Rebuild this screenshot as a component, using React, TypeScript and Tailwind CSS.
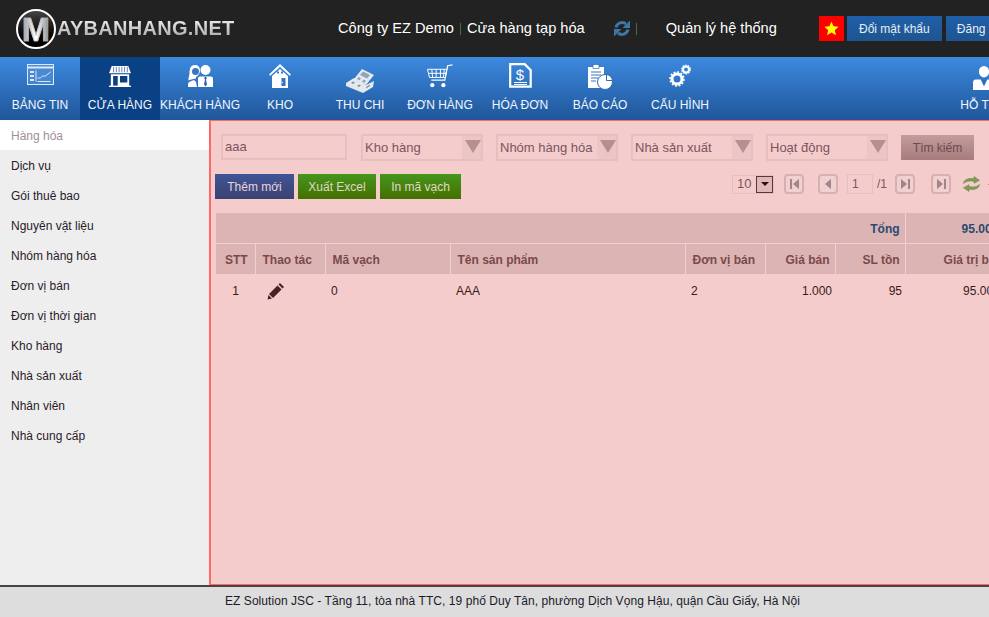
import React from 'react';

const font = { fontFamily: '"Liberation Sans", Arial, sans-serif' };

const IconDashboard = () => (
  <svg className="mb-[3px]" width="27" height="21" viewBox="0 0 27 21" fill="none" stroke="#dbe8f8" strokeWidth="1">
    <rect x="0.500" y="0.500" width="26" height="20" fill="#6fa3e2" fillOpacity="0.35" />
    <path d="M.5 3.500h26" strokeWidth="2" />
    <path d="M3 7h4v2H3zM3 11h4v2H3zM3 15h4v2H3z" fill="#dbe8f8" stroke="none" />
    <path d="M9 6.500v11M10.500 14h3l2-2h3l5-4M10.500 17.500h13" />
  </svg>
);

const IconStore = () => (
  <svg className="mb-px" width="22" height="22" viewBox="0 0 24 24" fill="#fff">
    <path d="M3 1h18l3 8H0z" />
    <path d="M5 2v6M8 2v6M11 2v6M14 2v6M17 2v6M20 2v6" stroke="#2a5a98" strokeWidth="0.800" />
    <path d="M2 10h20v13H2zM4.500 12v11h5V12zM12 12v7h8v-7z" fillRule="evenodd" />
    <path d="M0 22.500h24V24H0z" />
  </svg>
);

const IconCustomers = () => (
  <svg width="26" height="24" viewBox="0 0 26 24" fill="#fff">
    <path d="M8 1c3.600 0 5 2.600 5 5.500 0 3-2 5.500-4 6.500v1.500c-3.500 1-6.500 1-7.500 2C1 14 2.500 12 2.500 9 2.500 4 4 1 8 1z" />
    <circle cx="8.500" cy="7.500" r="3.500" fill="#3b75bd" />
    <circle cx="18.500" cy="6" r="5" />
    <path d="M13 12.500h11c1.200 0 2 .8 2 2V23H11v-8.500c0-1.200.8-2 2-2z" />
    <path d="M18.500 12.500L17 14l1 1.500-1 5 1.500 2 1.500-2-1-5 1-1.500z" fill="#2d65aa" />
    <path d="M1 23v-3c0-2 3-3 6-4l2 2 1 5z" />
  </svg>
);

const IconHouse = () => (
  <svg width="22" height="24" viewBox="0 0 22 24" fill="#fff">
    <path d="M11 0L0 10.500l1.200 1.300L11 3l9.800 8.800 1.200-1.300z" />
    <path d="M3 12l8-7 8 7v12H3zM8 7.500h2v2H8zM12 7.500h2v2h-2zM12.500 14v8h4v-8z" fillRule="evenodd" />
    <circle cx="13.500" cy="18.500" r="0.600" />
  </svg>
);

const IconMoney = () => (
  <svg className="-mb-[5px]" width="29" height="26" viewBox="0 0 29 26" fill="#e4e9ef">
    <path d="M8 12l8-10 12 6-8 10z" />
    <path d="M14 8l3-3.500 7 3.500-3 3.500z" fill="#8fa3ba" />
    <path d="M11 12l1.500-2 2.500 1.200-1.500 2zM16 14.500l1.500-2 2.500 1.200-1.500 2z" fill="#8fa3ba" />
    <path d="M0 16l8-5 12 7 8-4-1 6-10 6L0 19z" />
    <path d="M5 16l2-1.500 2 1-2 1.500zM11 19l2-1.500 2 1-2 1.500zM20 20l4-2.500v1.500l-4 2.500z" fill="#7d93ad" />
  </svg>
);

const IconCart = () => (
  <svg className="-mb-px" width="28" height="25" viewBox="0 0 28 26" fill="none" stroke="#fff" strokeWidth="1">
    <path d="M27 1l-5 .8-3 15H5" strokeWidth="1.300" />
    <path d="M1 5.500h20L19.500 14H3zM5.500 5.500L6.300 14M10 5.500V14M14.500 5.500V14M18.500 5.500L17.500 14M2 9.700h18.500" />
    <circle cx="6" cy="22" r="2.200" fill="#fff" stroke="none" />
    <circle cx="17.500" cy="22" r="2.200" fill="#fff" stroke="none" />
  </svg>
);

const IconInvoice = () => (
  <svg width="23" height="25" viewBox="0 0 23 25" fill="none" stroke="#fff">
    <path d="M1.200 1.200h14.500l6 6v16.500H1.200z" strokeWidth="2.200" />
    <text x="11" y="17" textAnchor="middle" fontSize="15" fill="#fff" stroke="none" fontFamily="Liberation Sans">
      $
    </text>
    <path d="M5 19.500h13M5 21.500h13" strokeWidth="1" />
  </svg>
);

const IconReport = () => (
  <svg className="-mb-[2px]" width="27" height="26" viewBox="0 0 27 26" fill="#fff">
    <path d="M1 3h16v21H1z" />
    <rect x="6" y="0.500" width="6" height="4" stroke="#2f6bb2" strokeWidth="0.700" />
    <path d="M4 8h10M4 11h10M4 14h7M4 17h5" stroke="#3a75bb" strokeWidth="1" />
    <circle cx="18" cy="18" r="7.500" stroke="#2f6bb2" strokeWidth="1" />
    <path d="M19.500 10.500a7.500 7.500 0 0 1 6 6h-6z" stroke="#2f6bb2" strokeWidth="1" />
  </svg>
);

const IconGears = () => (
  <svg className="mb-px" width="22" height="23" viewBox="0 0 22 23" fill="none" stroke="#fff">
    <circle cx="8" cy="15" r="5" strokeWidth="3" />
    <circle cx="8" cy="15" r="7" strokeWidth="1.500" strokeDasharray="2 1.650" />
    <circle cx="17" cy="5.500" r="3" strokeWidth="2" />
    <circle cx="17" cy="5.500" r="4.300" strokeWidth="1.200" strokeDasharray="1.600 1.100" />
  </svg>
);

const IconSupport = () => (
  <svg width="22" height="27" viewBox="0 0 26 28" fill="#fff" preserveAspectRatio="none">
    <circle cx="13" cy="9" r="6" />
    <path d="M3 17h6l4 7 4-7h6c1.500 0 3 1 3 3v8H0v-8c0-2 1.500-3 3-3z" />
    <path d="M13 17l-1.200 1.500 1.200 5 1.200-5z" fill="#2d65aa" />
  </svg>
);

const SyncIcon = () => (
  <svg width="18" height="19" viewBox="0 0 18 18" fill="#3d77a8" className="shrink-0">
    <path d="M3 8a6.200 6.200 0 0 1 10-3.500" fill="none" stroke="#3d77a8" strokeWidth="3" />
    <path d="M17 1v7.500H9.500z" />
    <path d="M15 10a6.200 6.200 0 0 1-10 3.500" fill="none" stroke="#3d77a8" strokeWidth="3" />
    <path d="M1 17V9.500h7.500z" />
  </svg>
);

const RefreshIcon = () => (
  <svg width="17" height="16" viewBox="0 0 17 16" fill="#7f9c52" stroke="#6b8743" strokeWidth="0.500" className="shrink-0">
    <path d="M.5 7.500C1 3.500 5 1.800 11 2.800V.5l5.500 3.800L11 7.300V5.400C7 4.500 3.500 5 .5 7.500z" />
    <path d="M16.500 8.500c-.5 4-4.500 5.700-10.500 4.700v2.300L.5 11.700 6 8.700v1.900c4 .9 7.500.4 10.500-2.100z" />
  </svg>
);

const navItems: { label: string; icon: React.ReactNode; active?: boolean }[] = [
  { label: 'BẢNG TIN', icon: <IconDashboard /> },
  { label: 'CỬA HÀNG', icon: <IconStore />, active: true },
  { label: 'KHÁCH HÀNG', icon: <IconCustomers /> },
  { label: 'KHO', icon: <IconHouse /> },
  { label: 'THU CHI', icon: <IconMoney /> },
  { label: 'ĐƠN HÀNG', icon: <IconCart /> },
  { label: 'HÓA ĐƠN', icon: <IconInvoice /> },
  { label: 'BÁO CÁO', icon: <IconReport /> },
  { label: 'CẤU HÌNH', icon: <IconGears /> },
];

const sideItems = [
  'Hàng hóa',
  'Dịch vụ',
  'Gói thuê bao',
  'Nguyên vật liệu',
  'Nhóm hàng hóa',
  'Đơn vị bán',
  'Đơn vị thời gian',
  'Kho hàng',
  'Nhà sản xuất',
  'Nhân viên',
  'Nhà cung cấp',
];

const FilterSelect = ({ label }: { label: string }) => (
  <div className="flex h-[27px] w-[122px] shrink-0 items-center justify-between border-2 border-[#e6c0c0] pl-[2px] text-[13px] text-[#7a5560]">
    <span>{label}</span>
    <span className="flex h-full w-[19px] items-start justify-center bg-[#ecc5c5] pt-[4px] pl-[2px]">
      <span className="block h-0 w-0 border-x-[8px] border-t-[13px] border-x-transparent border-t-[#b88f8f]" />
    </span>
  </div>
);

const PageButton = ({ dir, className = '' }: { dir: 'first' | 'prev' | 'next' | 'last'; className?: string }) => (
  <span
    className={`flex h-[20px] w-[20px] shrink-0 items-center justify-center gap-px rounded-[4px] border-2 border-[#d8b0b0] bg-[#f0d0d0] ${className}`}
  >
    {dir === 'first' && <span className="h-[10px] w-[2px] bg-[#a08686]" />}
    {(dir === 'first' || dir === 'prev') && (
      <span className="block h-0 w-0 border-y-[5px] border-r-[6px] border-y-transparent border-r-[#a08686]" />
    )}
    {(dir === 'next' || dir === 'last') && (
      <span className="block h-0 w-0 border-y-[5px] border-l-[6px] border-y-transparent border-l-[#a08686]" />
    )}
    {(dir === 'next' || dir === 'last') && <span className="h-[10px] w-[2px] bg-[#a08686]" />}
  </span>
);

const th = 'border-l border-t border-[#f0d0d0] pt-[2px] pr-[5px] pl-[7px] font-bold text-[#7a4a4a]';

export default function App() {
  return (
    <div className="flex h-[617px] w-[989px] flex-col overflow-hidden bg-white text-xs" style={font}>
      <header className="flex h-[57px] shrink-0 items-center whitespace-nowrap bg-[#222222]">
        <div className="ml-[16px] flex w-[322px] shrink-0 items-center">
          <span className="flex h-[40px] w-[40px] shrink-0 items-center justify-center rounded-full border-2 border-white bg-gradient-to-b from-[#444444] to-black">
            <span className="bg-gradient-to-r from-[#999999] via-white to-[#888888] bg-clip-text text-[34px] leading-none font-bold text-transparent [-webkit-text-stroke:0.6px_#bbbbbb]">
              M
            </span>
          </span>
          <span className="ml-[1px] bg-gradient-to-b from-white to-[#999999] bg-clip-text text-[20px] font-bold tracking-[0.3px] text-transparent">
            AYBANHANG.NET
          </span>
        </div>
        <span className="shrink-0 text-[14.6px] text-white">Công ty EZ Demo</span>
        <span className="mx-[6px] h-[12px] w-px shrink-0 bg-[#556655]" />
        <span className="shrink-0 text-[14.6px] text-white">Cửa hàng tạp hóa</span>
        <span className="ml-[28px] flex shrink-0">
          <SyncIcon />
        </span>
        <span className="ml-[5px] h-[12px] w-px shrink-0 bg-[#556655]" />
        <span className="ml-[29px] shrink-0 text-[14.6px] text-white">Quản lý hệ thống</span>
        <span className="ml-[42px] flex h-[25px] w-[25px] shrink-0 items-center justify-center bg-[#ff0000]">
          <svg width="15" height="15" viewBox="0 0 24 24" fill="#ffff00">
            <path d="M12 1l3.300 7.500 8 .8-6 5.400 1.800 8L12 18.500 4.900 22.700l1.800-8-6-5.400 8-.8z" />
          </svg>
        </span>
        <span className="ml-[3px] flex h-[25px] w-[95px] shrink-0 items-center justify-center bg-gradient-to-b from-[#1f5fa8] to-[#1d5590] text-[12px] text-[#e8eef5]">
          Đổi mật khẩu
        </span>
        <span className="ml-[4px] flex h-[25px] w-[80px] shrink-0 items-center justify-start bg-gradient-to-b from-[#1f5fa8] to-[#1d5590] pl-[11px] text-[12px] text-[#e8eef5]">
          Đăng xuất
        </span>
      </header>

      <nav className="flex h-[63px] shrink-0 bg-gradient-to-b from-[#3d8ae0] to-[#1f5699]">
        {navItems.map((item) => (
          <div
            key={item.label}
            className={`flex h-full w-[80px] shrink-0 flex-col items-center ${item.active ? 'bg-[#0a4184]' : ''}`}
          >
            <span className="flex h-[31px] items-end">{item.icon}</span>
            <span className="mt-[8px] text-[12px] leading-[18px] whitespace-nowrap text-[#f2f6fc]">{item.label}</span>
          </div>
        ))}
        <div className="ml-[224px] flex h-full w-[80px] shrink-0 flex-col items-center">
          <span className="flex h-[33px] items-end">
            <IconSupport />
          </span>
          <span className="mt-[6px] text-[12px] leading-[18px] whitespace-nowrap text-[#f2f6fc]">HỖ TRỢ</span>
        </div>
      </nav>

      <div className="flex min-h-0 flex-1">
        <aside className="w-[209px] shrink-0 bg-[#eeeeee] pb-[2px]">
          {sideItems.map((item, i) => (
            <div
              key={item}
              className={`flex h-[30px] items-center pt-[2px] pl-[11px] text-[12px] ${i === 0 ? 'bg-white text-[#a08f99]' : 'text-[#2a1a2a]'}`}
            >
              {item}
            </div>
          ))}
        </aside>

        <main className="relative min-w-0 flex-1 overflow-hidden border-t border-b border-l-2 border-[#ff6666] bg-[#f4cccc]">
          <div className="flex items-start pt-[13px] pl-[10px]">
            <div className="flex h-[26px] w-[126px] shrink-0 items-center border-2 border-[#e6c0c0] pl-[2px] text-[13px] text-[#7a5560]">
              aaa
            </div>
            <div className="ml-[14px] flex gap-[13px]">
              <FilterSelect label="Kho hàng" />
              <FilterSelect label="Nhóm hàng hóa" />
              <FilterSelect label="Nhà sản xuất" />
              <FilterSelect label="Hoạt động" />
            </div>
            <span className="mt-[1px] ml-[13px] flex h-[25px] w-[73px] shrink-0 items-center justify-center bg-gradient-to-b from-[#c39c9c] to-[#a87c7c] text-[12px] text-[#6a4a50]">
              Tìm kiếm
            </span>
          </div>

          <div className="mt-[13px] flex items-start pl-[4px]">
            <span className="flex h-[25px] w-[79px] shrink-0 items-center justify-center bg-gradient-to-b from-[#3f5596] to-[#3b4273] text-[12px] text-[#e8d4d8]">
              Thêm mới
            </span>
            <span className="ml-[4px] flex h-[25px] w-[78px] shrink-0 items-center justify-center bg-gradient-to-b from-[#45951d] to-[#447000] text-[12px] text-[#e0d8c0]">
              Xuất Excel
            </span>
            <span className="ml-[4px] flex h-[25px] w-[81px] shrink-0 items-center justify-center bg-gradient-to-b from-[#45951d] to-[#447000] text-[12px] text-[#e0d8c0]">
              In mã vạch
            </span>

            <div className="ml-[271px] flex shrink-0 items-center">
              <span className="flex h-[19px] w-[42px] shrink-0 items-center justify-between border border-[#e6c0c0] pl-[4px] text-[13px] text-[#7a5560]">
                10
                <span className="flex h-[17px] w-[17px] items-center justify-center border border-[#55393a] bg-[#e0b8b8]">
                  <span className="block h-0 w-0 border-x-[4px] border-t-[4px] border-x-transparent border-t-[#2a1015]" />
                </span>
              </span>
              <PageButton dir="first" className="ml-[10px]" />
              <PageButton dir="prev" className="ml-[14px]" />
              <span className="ml-[9px] flex h-[20px] w-[26px] shrink-0 items-center border border-[#e6c0c0] pl-[4px] text-[12px] text-[#7a5560]">
                1
              </span>
              <span className="ml-[4px] w-[18px] shrink-0 text-[12px] text-[#7a5560]">/1</span>
              <PageButton dir="next" />
              <PageButton dir="last" className="ml-[16px]" />
              <span className="ml-[12px] flex shrink-0">
                <RefreshIcon />
              </span>
              <span className="ml-[8px] h-px w-[4px] shrink-0 bg-[#e08a50]" />
            </div>
          </div>

          <table className="mt-[14px] ml-[5px] w-[840px] table-fixed border-collapse text-[12px]">
            <colgroup>
              <col className="w-[39px]" />
              <col className="w-[70px]" />
              <col className="w-[125px]" />
              <col className="w-[235px]" />
              <col className="w-[80px]" />
              <col className="w-[70px]" />
              <col className="w-[70px]" />
              <col className="w-[151px]" />
            </colgroup>
            <thead className="bg-[#dcb4b4]">
              <tr className="h-[30px]">
                <th colSpan={7} className="pt-[2px] pr-[5px] pl-[7px] text-right font-bold text-[#2a4a70]">
                  Tổng
                </th>
                <th className="border-l border-[#f0d0d0] px-[6px] pt-[2px] text-left font-bold whitespace-nowrap text-[#2a4a70]">
                  <span className="pl-[50px]">95.000</span>
                </th>
              </tr>
              <tr className="h-[31px]">
                <th className="border-t border-[#f0d0d0] pt-[2px] pr-[5px] pl-[7px] text-center font-bold text-[#7a4a4a]">STT</th>
                <th className={`${th} text-left`}>Thao tác</th>
                <th className={`${th} text-left`}>Mã vạch</th>
                <th className={`${th} text-left`}>Tên sản phẩm</th>
                <th className={`${th} text-left`}>Đơn vị bán</th>
                <th className={`${th} text-right`}>Giá bán</th>
                <th className={`${th} text-right`}>SL tồn</th>
                <th className={`${th} text-left whitespace-nowrap`}>
                  <span className="pl-[31px]">Giá trị bán</span>
                </th>
              </tr>
            </thead>
            <tbody className="text-[#3a1a1a]">
              <tr className="h-[32px]">
                <td className="pt-[2px] text-center">1</td>
                <td className="pt-[2px] pl-[12px]">
                  <svg width="18" height="18" viewBox="0 0 18 18" fill="#4a2025">
                    <path d="M13 1l4 4-1.500 1.500-4-4zM10.500 3.500l4 4L6 16l-4-4zM1.500 13L5 16.500.5 17.500z" />
                  </svg>
                </td>
                <td className="pt-[2px] pl-[6px]">0</td>
                <td className="pt-[2px] pl-[6px]">AAA</td>
                <td className="pt-[2px] pl-[6px]">2</td>
                <td className="pt-[2px] pr-[3px] text-right">1.000</td>
                <td className="pt-[2px] pr-[3px] text-right">95</td>
                <td className="pt-[2px] pl-[58px] whitespace-nowrap">95.000</td>
              </tr>
            </tbody>
          </table>
        </main>
      </div>

      <footer className="flex h-[32px] shrink-0 items-center justify-center border-t-2 border-[#444444] bg-[#dddddd] pb-[3px] pl-[36px] text-[12px] tracking-[0.06px] text-[#1a1a2a]">
        EZ Solution JSC - Tầng 11, tòa nhà TTC, 19 phố Duy Tân, phường Dịch Vọng Hậu, quận Cầu Giấy, Hà Nội
      </footer>
    </div>
  );
}
